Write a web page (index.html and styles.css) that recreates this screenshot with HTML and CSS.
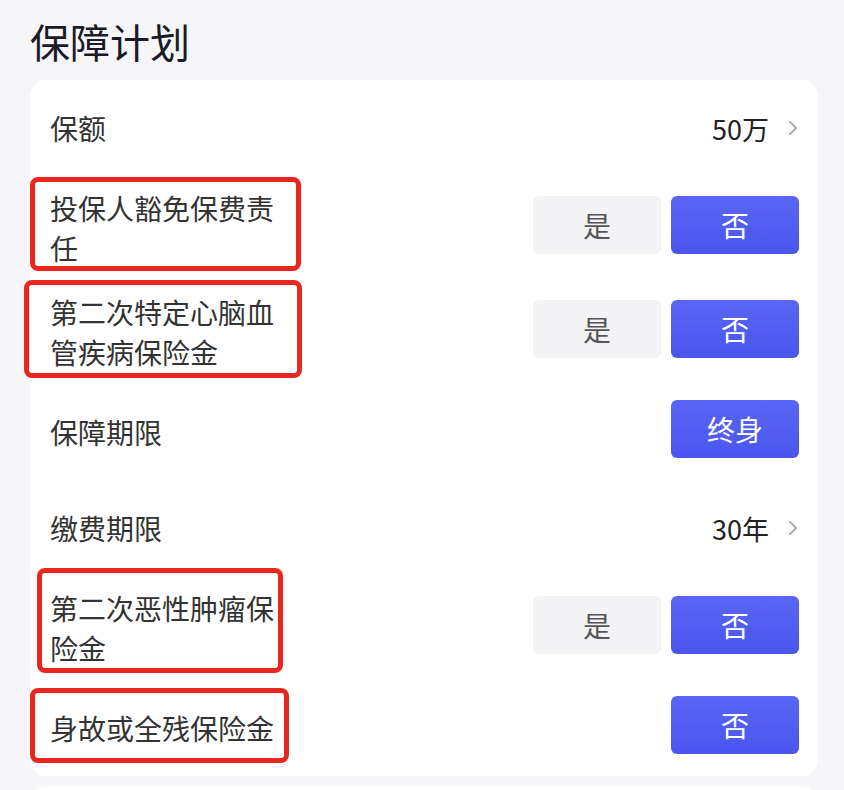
FILE: index.html
```html
<!DOCTYPE html>
<html lang="zh-CN">
<head>
<meta charset="utf-8">
<title>保障计划</title>
<link rel="stylesheet" href="styles.css">
</head>
<body>
<div class="page">
  <h1 class="title">保障计划</h1>
  <div class="card">
    <div class="row single">
      <div class="label">保额</div>
      <div class="value">50万<svg class="chev" viewBox="0 0 12 16" width="12" height="16"><path d="M3 2 L9 8 L3 14" fill="none" stroke="#b0b0b4" stroke-width="2" stroke-linecap="round" stroke-linejoin="round"/></svg></div>
    </div>
    <div class="row double">
      <div class="label">投保人豁免保费责任</div>
      <div class="btns"><span class="btn off">是</span><span class="btn on">否</span></div>
      <div class="mark m1"></div>
    </div>
    <div class="row double">
      <div class="label">第二次特定心脑血管疾病保险金</div>
      <div class="btns"><span class="btn off">是</span><span class="btn on">否</span></div>
      <div class="mark m2"></div>
    </div>
    <div class="row single">
      <div class="label">保障期限</div>
      <div class="btns"><span class="btn on">终身</span></div>
    </div>
    <div class="row single">
      <div class="label">缴费期限</div>
      <div class="value">30年<svg class="chev" viewBox="0 0 12 16" width="12" height="16"><path d="M3 2 L9 8 L3 14" fill="none" stroke="#b0b0b4" stroke-width="2" stroke-linecap="round" stroke-linejoin="round"/></svg></div>
    </div>
    <div class="row double">
      <div class="label">第二次恶性肿瘤保险金</div>
      <div class="btns"><span class="btn off">是</span><span class="btn on">否</span></div>
      <div class="mark m3"></div>
    </div>
    <div class="row single">
      <div class="label">身故或全残保险金</div>
      <div class="btns"><span class="btn on">否</span></div>
      <div class="mark m4"></div>
    </div>
  </div>
  <div class="card next"></div>
</div>
</body>
</html>
```

FILE: styles.css
```css
html, body {
  margin: 0;
  padding: 0;
  background: #f6f6f8;
}
body {
  font-family: "Noto Sans CJK SC", "Noto Sans", sans-serif;
  color: #333;
  overflow: hidden;
}
.page {
  padding: 0 26px 0 30px;
}
.title {
  margin: 0;
  padding-top: 16px;
  height: 80px;
  box-sizing: border-box;
  font-size: 40px;
  line-height: 50px;
  font-weight: 400;
  color: #1b1b27;
}
.card {
  background: #fff;
  border-radius: 16px;
  padding: 0 19px 0 20px;
}
.card.next {
  margin-top: 10px;
  height: 40px;
}
.row {
  position: relative;
  display: flex;
  align-items: center;
  justify-content: space-between;
  box-sizing: border-box;
  padding: 12px 0;
}
.row.single {
  height: 96px;
}
.row.double {
  height: 104px;
}
.label {
  width: 240px;
  font-size: 28px;
  line-height: 40px;
  color: #333;
}
.value {
  display: flex;
  align-items: center;
  font-size: 27px;
  color: #222;
  margin-right: 0;
}
.chev {
  margin-left: 18px;
}
.btns {
  display: flex;
  gap: 10px;
  margin-bottom: 6px;
}
.btn {
  width: 128px;
  height: 58px;
  border-radius: 6px;
  display: flex;
  align-items: center;
  justify-content: center;
  font-size: 28px;
}
.btn.off {
  background: #f3f2f4;
  color: #555;
}
.btn.on {
  background: linear-gradient(180deg, #5a66f6 0%, #4a55ee 100%);
  color: #fff;
}
.mark {
  position: absolute;
  border: 5px solid #e8281f;
  border-radius: 8px;
  box-sizing: border-box;
}
.m1 { left: -20px; top: 1px; width: 271px; height: 94px; }
.m2 { left: -26px; top: 0; width: 278px; height: 98px; }
.m3 { left: -13px; top: -8px; width: 246px; height: 105px; }
.m4 { left: -20px; top: 8px; width: 259px; height: 75px; }
```
